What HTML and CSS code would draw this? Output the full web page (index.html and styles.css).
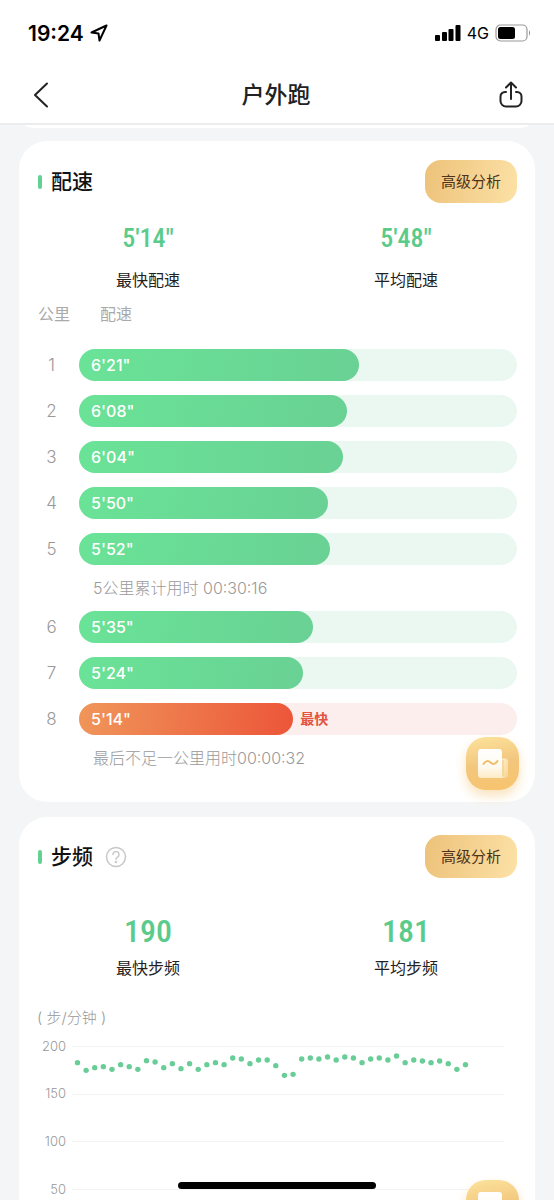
FILE: index.html
```html
<!DOCTYPE html>
<html lang="zh-CN">
<head>
<meta charset="utf-8">
<meta name="viewport" content="width=device-width, initial-scale=1">
<title>户外跑</title>
<link rel="stylesheet" href="styles.css">
</head>
<body>
<svg width="0" height="0" class="defs" aria-hidden="true">
  <defs>
    <linearGradient id="sheet" x1="0" y1="0" x2="0" y2="1"><stop offset="0" stop-color="#fff"/><stop offset=".6" stop-color="#fffaf0"/><stop offset="1" stop-color="#fdebc4"/></linearGradient>
    <linearGradient id="fold" x1="0" y1="0" x2="1" y2="1"><stop offset="0" stop-color="#fff4d8"/><stop offset="1" stop-color="#f7d490"/></linearGradient>
    <symbol id="report" viewBox="0 0 32 32">
      <path d="M23 10.500h5a3 3 0 0 1 3 3V27a3 3 0 0 1-3 3h-7z" fill="url(#fold)"/>
      <path d="M26 12v14.500q0 3-3 3.500" fill="none" stroke="#f3cb83" stroke-width="1"/>
      <path d="M4 1h18a3 3 0 0 1 3 3v20q0 6 2 6H4a3 3 0 0 1-3-3V4a3 3 0 0 1 3-3z" fill="url(#sheet)"/>
      <path d="M6.500 16q3.500-5 7-1.500t7-1.500" fill="none" stroke="#efbd66" stroke-width="2" stroke-linecap="round"/>
    </symbol>
  </defs>
</svg>
<div class="screen">
  <header class="top">
    <div class="status">
      <div class="status-side">
        <span class="clock">19:24</span>
        <svg width="18" height="18" viewBox="0 0 18 18" fill="none" stroke="#000" stroke-width="2" stroke-linejoin="round"><path d="M16.500 1.500 1.500 8.500l7 1L9.500 16.500z"/></svg>
      </div>
      <div class="status-side">
        <svg width="26" height="16" viewBox="0 0 26 16"><rect x="0" y="10" width="5" height="6" rx="1"/><rect x="7" y="7" width="5" height="9" rx="1"/><rect x="13.500" y="4" width="5" height="12" rx="1"/><rect x="20.500" y="0" width="5" height="16" rx="1"/></svg>
        <span class="network">4G</span>
        <svg width="36" height="18" viewBox="0 0 36 18"><rect x="1" y="1" width="31" height="16" rx="4.500" fill="none" stroke="#999" stroke-width="1.200"/><rect x="3" y="3" width="17" height="12" rx="2.500"/><path d="M34 6q2 3 0 6z" fill="#888"/></svg>
      </div>
    </div>
    <nav class="nav">
      <button class="icon-btn" aria-label="返回"><svg width="26" height="28" viewBox="0 0 26 28" fill="none" stroke="#222" stroke-width="2" stroke-linecap="round" stroke-linejoin="round"><path d="M19 2.500 7 14l12 11.500"/></svg></button>
      <h1 class="title">户外跑</h1>
      <button class="icon-btn" aria-label="分享"><svg width="26" height="28" viewBox="0 0 26 28" fill="none" stroke="#222" stroke-width="2" stroke-linecap="round" stroke-linejoin="round"><path d="M13 18V1.500M8 6.500l5-5 5 5M8 11H7a4.500 4.500 0 0 0-4.500 4.500V20A5.500 5.500 0 0 0 8 25.500h10a5.500 5.500 0 0 0 5.500-5.500v-4.500A4.500 4.500 0 0 0 19 11h-1"/></svg></button>
    </nav>
  </header>

  <main class="content">
    <div class="card previous"></div>

    <section class="card pace">
      <div class="card-head"><h2 class="card-title">配速</h2><button class="analyze">高级分析</button></div>
      <div class="stats">
        <div class="stat"><strong class="figure">5'14"</strong><span class="label">最快配速</span></div>
        <div class="stat"><strong class="figure">5'48"</strong><span class="label">平均配速</span></div>
      </div>
      <div class="columns"><span>公里</span><span>配速</span></div>
      <ol class="splits">
        <li class="split"><span class="km">1</span><div class="track"><div class="bar" style="width:64.0%">6'21"</div></div></li>
        <li class="split"><span class="km">2</span><div class="track"><div class="bar" style="width:61.1%">6'08"</div></div></li>
        <li class="split"><span class="km">3</span><div class="track"><div class="bar" style="width:60.2%">6'04"</div></div></li>
        <li class="split"><span class="km">4</span><div class="track"><div class="bar" style="width:56.9%">5'50"</div></div></li>
        <li class="split"><span class="km">5</span><div class="track"><div class="bar" style="width:57.4%">5'52"</div></div></li>
        <li class="note">5公里累计用时 00:30:16</li>
        <li class="split"><span class="km">6</span><div class="track"><div class="bar" style="width:53.5%">5'35"</div></div></li>
        <li class="split"><span class="km">7</span><div class="track"><div class="bar" style="width:51.2%">5'24"</div></div></li>
        <li class="split fastest"><span class="km">8</span><div class="track"><div class="bar" style="width:48.9%">5'14"</div><span class="tag">最快</span></div></li>
        <li class="note">最后不足一公里用时00:00:32</li>
      </ol>
      <button class="report" aria-label="报告"><svg width="32" height="32"><use href="#report"/></svg></button>
    </section>

    <section class="card cadence">
      <div class="card-head"><h2 class="card-title">步频</h2>
        <button class="help" aria-label="说明"><svg width="22" height="22" viewBox="0 0 22 22" fill="none" stroke="#c8c8c8" stroke-width="1.500" stroke-linecap="round"><circle cx="11" cy="11" r="9.500"/><path d="M8 8.500a3 3 0 1 1 4.500 2.600q-1.500.9-1.500 2.200"/><circle cx="11" cy="16" r=".5" fill="#c8c8c8"/></svg></button>
        <button class="analyze">高级分析</button></div>
      <div class="stats">
        <div class="stat"><strong class="figure">190</strong><span class="label">最快步频</span></div>
        <div class="stat"><strong class="figure">181</strong><span class="label">平均步频</span></div>
      </div>
      <div class="unit">( 步/分钟 )</div>
      <svg class="chart" viewBox="0 0 479 170" role="img" aria-label="步频图">
        <g class="grid"><path d="M34 10.500H466M34 58.500H466M34 105.500H466M34 153.500H466"/></g>
        <g class="axis"><text x="28" y="15">200</text><text x="28" y="62">150</text><text x="28" y="110">100</text><text x="28" y="158">50</text></g>
        <g id="dots" class="dots"></g>
      </svg>
      <button class="report" aria-label="报告"><svg width="32" height="32"><use href="#report"/></svg></button>
    </section>
  </main>
  <div class="home"></div>
</div>
<script src="chart.js"></script>
</body>
</html>
```
FILE: styles.css
```css
* { box-sizing: border-box; }
body, h1, h2, ol { margin: 0; padding: 0; }
body { font-family: "Liberation Sans", "Noto Sans CJK SC", sans-serif; background: #f4f5f7; color: #222; font-size: 16px; }
button { border: 0; padding: 0; background: none; font: inherit; color: inherit; cursor: pointer; }
svg { display: block; flex: none; }
.defs { position: absolute; }
.screen { height: 100vh; display: flex; flex-direction: column; overflow: hidden; }
.top { flex: none; background: #fff; border-bottom: 2px solid #ebecee; }
.status { display: flex; justify-content: space-between; align-items: center; height: 66px; padding: 0 23px 0 28px; }
.status-side { display: flex; align-items: center; gap: 6px; font-family: Inter, sans-serif; color: #000; }
.clock { font-size: 21px; font-weight: 600; }
.network { font-size: 16px; font-weight: 400; }
.nav { display: flex; align-items: center; justify-content: space-between; height: 57px; padding: 0 30px 0 28px; }
.title { font-size: 23px; line-height: 32px; font-weight: 500; }
.content { flex: 1; min-height: 0; overflow: hidden; padding: 0 19px; }
.card { position: relative; background: #fff; border-radius: 28px; margin-bottom: 15px; }
.previous { height: 28px; margin-top: -25px; margin-bottom: 13px; }
.pace { padding: 19px 0 35px; }
.cadence { padding: 18px 0 39px; }
.card-head { display: flex; align-items: center; padding: 0 18px 0 19px; height: 43px; }
.card-title { display: flex; align-items: center; gap: 9px; font-size: 21px; line-height: 28px; font-weight: 500; color: #111; }
.card-title::before { content: ""; width: 4px; height: 14px; border-radius: 2px; background: #62d292; }
.help { margin-left: 12px; }
.analyze { margin-left: auto; height: 43px; padding: 0 16px; border-radius: 16px; font-size: 15px; line-height: 20px; color: #4d3317; background: linear-gradient(100deg, #edc27a, #fce1a6); }
.stats { display: grid; grid-template-columns: 1fr 1fr; padding-top: 15px; }
.stat { display: flex; flex-direction: column; align-items: center; }
.figure { height: 40px; line-height: 40px; font-family: "Roboto Condensed", "Liberation Sans Narrow", "Liberation Sans", sans-serif; font-size: 26px; font-weight: 500; color: #5bcb8b; }
.label { line-height: 24px; margin-top: 11px; }
.cadence .stats { padding-top: 33px; }
.cadence .figure { font-size: 32px; }
.cadence .label { margin-top: 6px; }
.columns { display: flex; gap: 30px; padding: 10px 19px 0; line-height: 24px; color: #aaa; }
.splits { list-style: none; display: grid; gap: 14px; padding: 22px 18px 0 19px; }
.split { display: grid; grid-template-columns: 27px 1fr; gap: 14px; align-items: center; }
.km { text-align: center; font-family: Inter, sans-serif; font-size: 17px; line-height: 20px; font-weight: 300; color: #999; }
.track { display: flex; align-items: center; height: 32px; border-radius: 16px; background: #ebf8f2; }
.bar { height: 32px; line-height: 32px; padding-left: 12px; border-radius: 16px; background: linear-gradient(100deg, #6ae397, #69d194); color: #fff; font-family: Inter, sans-serif; font-size: 16px; font-weight: 500; }
.fastest .track { background: #fbeeed; }
.fastest .bar { background: linear-gradient(100deg, #f0965a, #ec5539); }
.tag { margin-left: 7px; font-size: 14px; line-height: 20px; font-weight: 700; color: #e35440; }
.note { padding-left: 55px; line-height: 18px; font-family: Inter, "Noto Sans CJK SC", sans-serif; font-weight: 300; color: #999; }
.report { position: absolute; right: 16px; bottom: 12px; width: 53px; height: 53px; border-radius: 20px; display: grid; place-items: center; background: linear-gradient(170deg, #fce39c, #f3c67e 50%, #f8c46c); box-shadow: 0 6px 12px #fae3bd; }
.unit { margin: 26px 18px 0; line-height: 22px; font-family: Inter, "Noto Sans CJK SC", sans-serif; font-size: 15px; font-weight: 300; color: #999; }
.chart { width: calc(100% - 37px); margin: 7px 18px 0 19px; }
.grid { stroke: #f3f3f3; fill: none; }
.axis { font-family: Inter, sans-serif; font-size: 13px; font-weight: 300; fill: #999; text-anchor: end; }
.dots { fill: #68cd97; }
.home { position: fixed; left: 50%; bottom: 11px; width: 198px; height: 7px; margin-left: -99px; border-radius: 4px; background: #000; }
```
FILE: chart.js
```js
// Vertical dot positions, in thirds of a chart unit.
const samples = [188,211,203,200,208,194,200,208,182,186,203,191,206,191,208,194,188,194,174,177,191,180,180,197,226,223,177,174,177,171,180,171,174,188,177,174,180,168,188,180,183,188,183,191,208,194];
const step = 388 / (samples.length - 1);
const dots = document.getElementById("dots");
samples.forEach((value, i) => {
  const dot = document.createElementNS("http://www.w3.org/2000/svg", "circle");
  dot.setAttribute("cx", 39.5 + i * step);
  dot.setAttribute("cy", (value - 108) / 3);
  dot.setAttribute("r", 2.7);
  dots.appendChild(dot);
});
```
